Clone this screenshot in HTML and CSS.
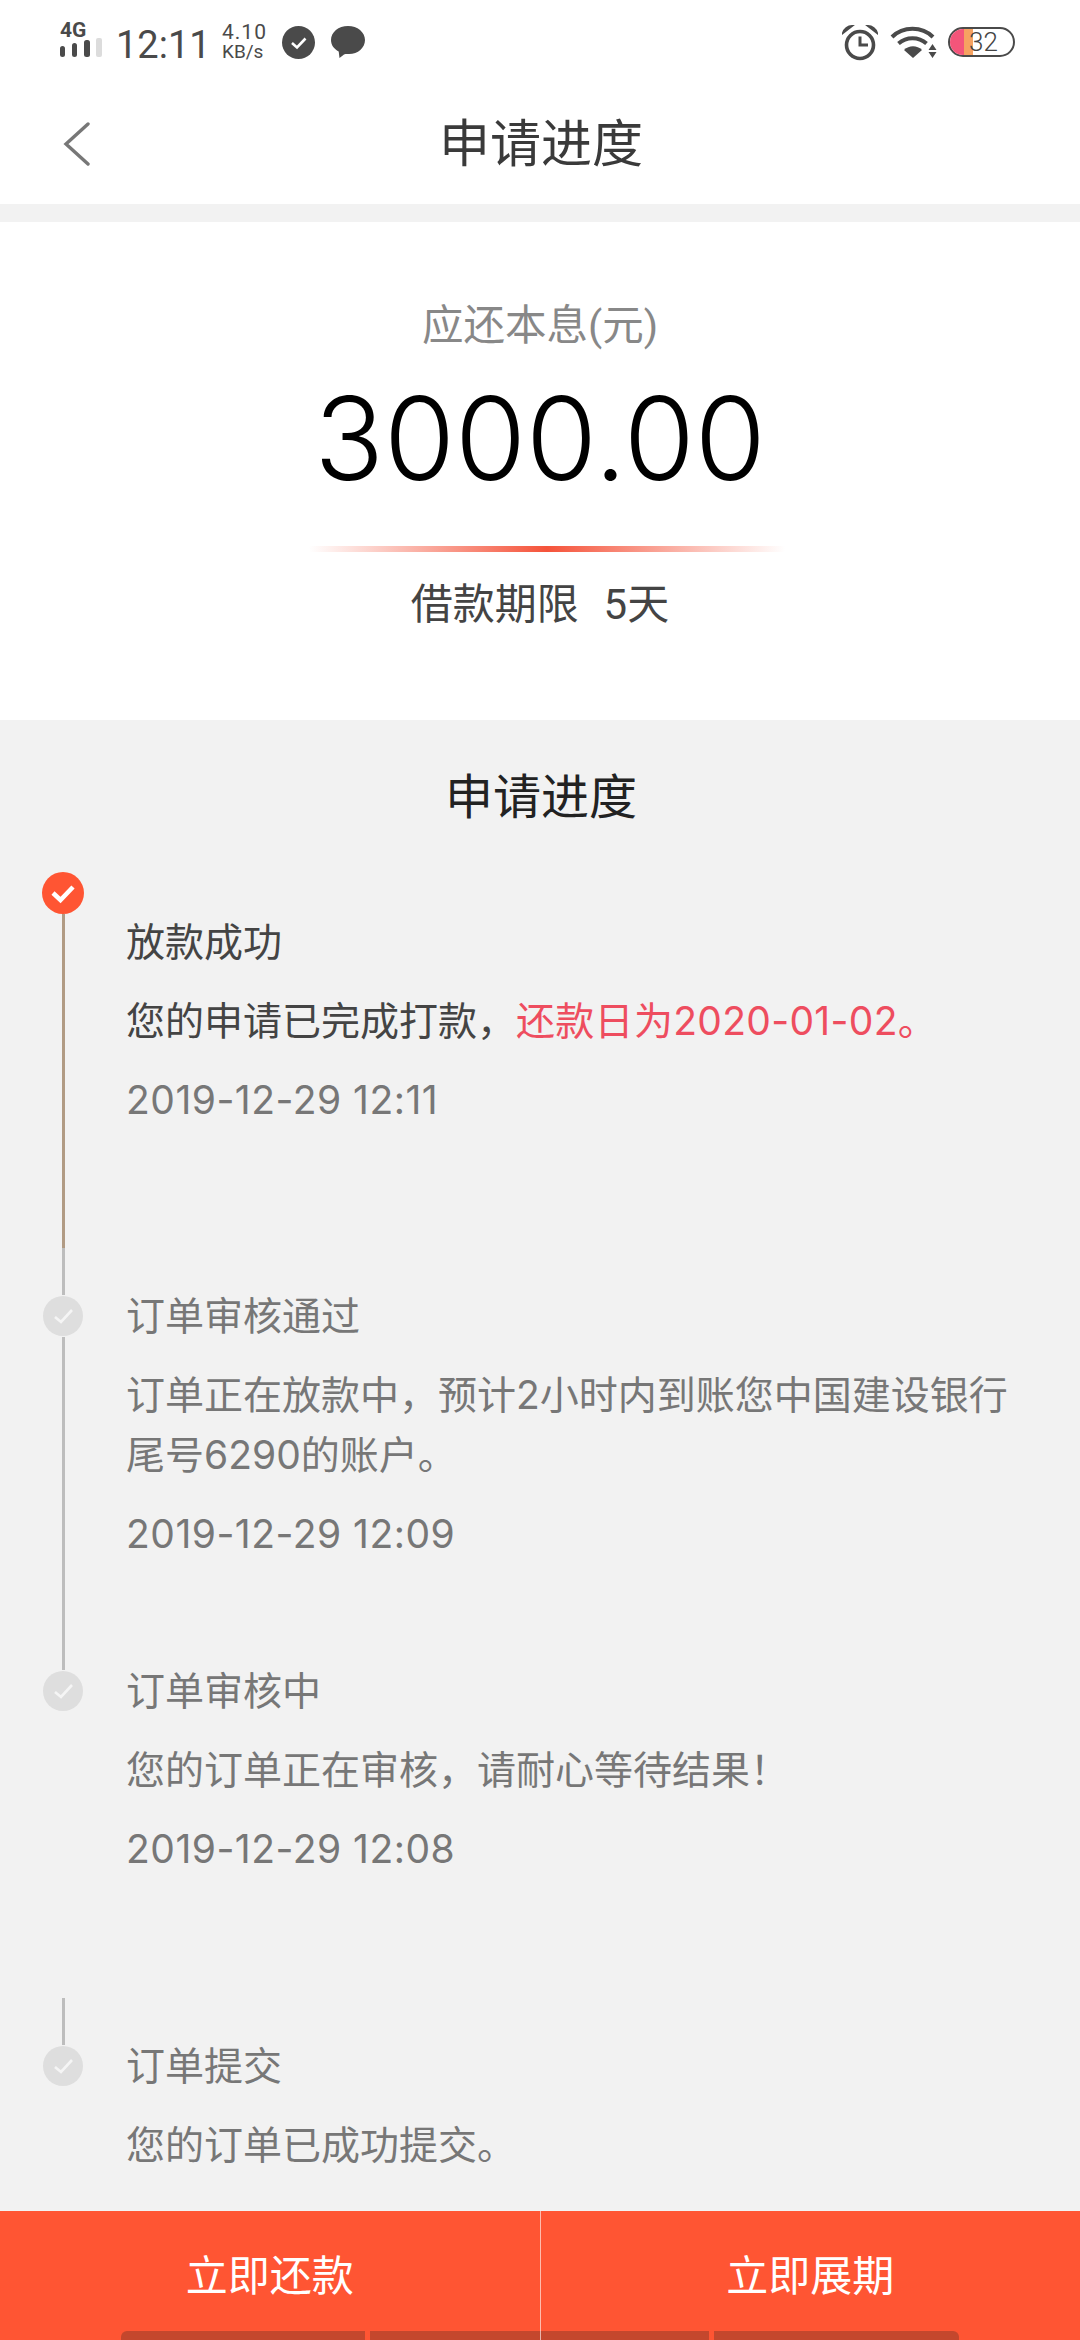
FILE: index.html
```html
<!DOCTYPE html>
<html>
<head>
    <meta charset="UTF-8">
    <title>申请进度</title>
    <link rel="stylesheet" href="styles.css">
</head>
<body>
    <div class="page">
        <!-- status bar -->
        <div class="statusbar">
            <div class="status-left">
                <div class="signal">
                    <span class="net">4G</span>
                    <svg width="42" height="20" viewBox="0 0 42 20"><g fill="#4a4a4a"><rect x="0" y="8" width="5" height="11" rx="2.5"/><rect x="12" y="5" width="5" height="14" rx="2.5"/><rect x="24" y="2" width="6" height="17" rx="2.5"/></g><rect x="36" y="0" width="6" height="19" rx="2" fill="#dcdcdc"/></svg>
                </div>
                <span class="clock">12:11</span>
                <div class="speed"><span>4.10</span><span class="unit">KB/s</span></div>
                <svg class="st-check" width="33" height="33" viewBox="0 0 33 33"><circle cx="16.5" cy="16.5" r="16.5" fill="#4a4a4a"/><path d="M10 17l5 4.5 8.5-9" fill="none" stroke="#fff" stroke-width="2.6"/></svg>
                <svg class="st-msg" width="34" height="32" viewBox="0 0 34 32"><path d="M17 0c9.500 0 17 6.200 17 14s-7 14-16 14c-2 0-3.500-.2-5 .5L8.500 32l-.8-6.500C3 23 0 19 0 14 0 6.200 7.500 0 17 0z" fill="#4a4a4a"/></svg>
            </div>
            <div class="status-right">
                <svg width="36" height="36" viewBox="0 0 36 36"><circle cx="18" cy="20" r="13.500" fill="none" stroke="#4a4a4a" stroke-width="3.600"/><path d="M18 11.500V20h8" fill="none" stroke="#4a4a4a" stroke-width="3"/><path d="M1 8c1-4 5-7 9-7L1 8zM35 8c-1-4-5-7-9-7l9 7z" fill="#4a4a4a" stroke="#4a4a4a" stroke-width="2"/></svg>
                <svg class="wifi" width="47" height="34" viewBox="0 0 47 34"><g fill="none" stroke="#4a4a4a" stroke-width="4"><path d="M2 12C13 1 32 1 43 12"/><path d="M8.500 18.500c8-7 20-7 28 0"/></g><path d="M14 25c5-5 13-5 18 0l-9 8z" fill="#4a4a4a"/><path d="M42.500 19l4 6h-8zM42.500 33l-4-6h8z" fill="#4a4a4a"/></svg>
                <div class="battery">
                    <span class="batt-red"></span><span class="batt-orange"></span>
                    <span class="batt-num">32</span>
                </div>
            </div>
        </div>

        <!-- title bar -->
        <div class="topbar">
            <svg class="back" width="27" height="44" viewBox="0 0 27 44"><path d="M25 2L3 22l22 20" fill="none" stroke="#777" stroke-width="3.400" stroke-linecap="round"/></svg>
            <h1>申请进度</h1>
        </div>

        <!-- amount -->
        <div class="hero">
            <div class="hero-label">应还本息(元)</div>
            <div class="hero-amount">3000.00</div>
            <div class="hero-line"></div>
            <div class="hero-term">借款期限&nbsp;&nbsp;5天</div>
        </div>

        <!-- progress list -->
        <div class="progress">
            <h2>申请进度</h2>

            <div class="step step-first">
                <div class="rail">
                    <svg class="dot-on" width="42" height="42" viewBox="0 0 42 42"><circle cx="21" cy="21" r="21" fill="#ff5533"/><path d="M11 21l7.500 7L31 15" fill="none" stroke="#fff" stroke-width="4.500"/></svg>
                    <div class="seg seg-brown"></div>
                    <div class="seg seg-gray seg-tail"></div>
                </div>
                <div class="body body-first done">
                    <div class="title">放款成功</div>
                    <div class="desc">您的申请已完成打款，<span class="red">还款日为2020-01-02。</span></div>
                    <div class="time">2019-12-29 12:11</div>
                </div>
            </div>

            <div class="step step-second">
                <div class="rail">
                    <div class="dot-off"><svg width="40" height="40" viewBox="0 0 40 40"><path d="M12 21l6 5 11-12" fill="none" stroke="#f5f5f5" stroke-width="2.600"/></svg></div>
                    <div class="seg seg-gray"></div>
                </div>
                <div class="body">
                    <div class="title">订单审核通过</div>
                    <div class="desc">订单正在放款中，预计2小时内到账您中国建设银行<br>尾号6290的账户。</div>
                    <div class="time">2019-12-29 12:09</div>
                </div>
            </div>

            <div class="step step-third">
                <div class="rail">
                    <div class="dot-off"><svg width="40" height="40" viewBox="0 0 40 40"><path d="M12 21l6 5 11-12" fill="none" stroke="#f5f5f5" stroke-width="2.600"/></svg></div>
                </div>
                <div class="body">
                    <div class="title">订单审核中</div>
                    <div class="desc">您的订单正在审核，请耐心等待结果！</div>
                    <div class="time">2019-12-29 12:08</div>
                </div>
            </div>

            <div class="step">
                <div class="rail">
                    <div class="seg seg-gray seg-tail"></div>
                    <div class="dot-off"><svg width="40" height="40" viewBox="0 0 40 40"><path d="M12 21l6 5 11-12" fill="none" stroke="#f5f5f5" stroke-width="2.600"/></svg></div>
                </div>
                <div class="body body-last">
                    <div class="title">订单提交</div>
                    <div class="desc">您的订单已成功提交。</div>
                </div>
            </div>
        </div>

        <!-- bottom buttons -->
        <div class="footer">
            <div class="foot-btn">立即还款</div>
            <div class="foot-btn foot-right">立即展期</div>
            <div class="navhint"><span></span><span></span><span></span></div>
        </div>
    </div>
</body>
</html>
```

FILE: styles.css
```css
* {
    box-sizing: border-box;
}
body {
    margin: 0;
    font-family: Roboto, "Noto Sans CJK SC", sans-serif;
    background-color: #f2f2f2;
    color: #444;
}
.page {
    width: 1080px;
    height: 2340px;
    display: flex;
    flex-direction: column;
    overflow: hidden;
}

/* status bar */
.statusbar {
    height: 74px;
    flex: none;
    background: white;
    display: flex;
    justify-content: space-between;
    padding: 22px 65px 0 60px;
    color: #4a4a4a;
}
.status-left, .status-right {
    display: flex;
    align-items: flex-start;
}
.signal {
    width: 43px;
    display: flex;
    flex-direction: column;
}
.net {
    font-size: 21px;
    font-weight: 700;
    line-height: 16px;
}
.clock {
    font-size: 38px;
    line-height: 46px;
    margin-left: 13px;
    width: 106px;
}
.speed {
    display: flex;
    flex-direction: column;
    font-size: 21px;
    line-height: 21px;
    width: 60px;
    letter-spacing: 1px;
}
.speed .unit {
    font-size: 19px;
    line-height: 17px;
    letter-spacing: 0;
}
.st-check {
    margin-top: 4px;
}
.st-msg {
    margin: 4px 0 0 16px;
}
.status-right svg {
    margin-top: 3px;
}
.status-right .wifi {
    margin-left: 12px;
}
.battery {
    position: relative;
    width: 67px;
    height: 30px;
    margin: 5px 0 0 11px;
    border: 2px solid #4a4a4a;
    border-radius: 15px;
    overflow: hidden;
    display: flex;
}
.batt-red {
    width: 14px;
    background: #f4557a;
}
.batt-orange {
    width: 9px;
    background: #f6a261;
}
.batt-num {
    position: absolute;
    left: 19px;
    top: 0;
    font-size: 26px;
    line-height: 26px;
    font-weight: 300;
    color: #444;
}

/* title bar */
.topbar {
    height: 130px;
    flex: none;
    background: white;
    position: relative;
    display: flex;
    align-items: center;
    justify-content: center;
}
.back {
    position: absolute;
    left: 63px;
    top: 48px;
}
h1 {
    margin: 12px 0 0;
    font-size: 51px;
    font-weight: 400;
    color: #3a3a3a;
    line-height: 60px;
    padding-left: 2px;
}

/* amount */
.hero {
    margin-top: 18px;
    height: 498px;
    flex: none;
    background: white;
    display: flex;
    flex-direction: column;
    align-items: center;
}
.hero-label {
    margin-top: 76px;
    font-size: 41.5px;
    line-height: 56px;
    color: #888;
}
.hero-amount {
    margin-top: 17px;
    font-family: Inter, Roboto, sans-serif;
    font-size: 115px;
    font-weight: 300;
    line-height: 136px;
    color: #000;
}
.hero-line {
    margin: 39px 0 0 14px;
    width: 476px;
    height: 6px;
    background: linear-gradient(to right, rgba(245, 83, 58, 0), #f5533a 50%, rgba(245, 83, 58, 0));
}
.hero-term {
    margin-top: 25px;
    font-size: 42px;
    line-height: 56px;
    color: #444;
    word-spacing: 2px;
}

/* progress list */
.progress {
    flex: 1;
    overflow: hidden;
}
h2 {
    margin: 0;
    height: 152px;
    padding-top: 48px;
    font-size: 48px;
    line-height: 60px;
    font-weight: 400;
    color: #222;
    text-align: center;
    padding-left: 2px;
}
.step {
    display: flex;
}
.step-first {
    height: 423px;
}
.step-second {
    height: 375px;
}
.step-third {
    height: 328px;
}
.rail {
    width: 42px;
    margin-left: 42px;
    flex: none;
    display: flex;
    flex-direction: column;
    align-items: center;
}
.dot-on {
    flex: none;
    display: block;
}
.dot-off {
    flex: none;
    width: 40px;
    height: 40px;
    margin: 1px 0;
    border-radius: 50%;
    background: #dedede;
}
.dot-off svg {
    display: block;
}
.seg {
    flex: 1;
    width: 3px;
}
.seg-brown {
    background: #b19b84;
}
.seg-gray {
    background: #bdbdbd;
}
.seg-tail {
    flex: none;
    height: 47px;
}
.body {
    margin-left: 42px;
    color: #777;
    font-family: Inter, "Noto Sans CJK SC", sans-serif;
    font-size: 39px;
}
.body-first {
    padding-top: 49px;
}
.body-last {
    padding-top: 47px;
}
.done .title, .done .desc {
    color: #444;
}
.title {
    line-height: 42px;
}
.desc {
    margin-top: 28px;
    line-height: 60px;
}
.time {
    margin-top: 19px;
    line-height: 60px;
    letter-spacing: 0.5px;
}
.red {
    color: #ee4d5f;
    letter-spacing: 0.3px;
}

/* bottom buttons */
.footer {
    position: relative;
    flex: none;
    height: 129px;
    background: #ff5533;
    display: flex;
}
.foot-btn {
    position: relative;
    z-index: 1;
    flex: 1;
    color: #fff;
    font-size: 42px;
    line-height: 132px;
    text-align: center;
}
.foot-right {
    border-left: 1px solid rgba(255, 255, 255, 0.6);
}
.navhint {
    position: absolute;
    left: 121px;
    bottom: 0;
    display: flex;
    gap: 5px;
}
.navhint span {
    width: 244px;
    height: 9px;
    background: #c4472d;
}
.navhint span:first-child {
    border-top-left-radius: 6px;
}
.navhint span:nth-child(2) {
    width: 339px;
}
.navhint span:last-child {
    width: 245px;
    border-top-right-radius: 6px;
}
```
